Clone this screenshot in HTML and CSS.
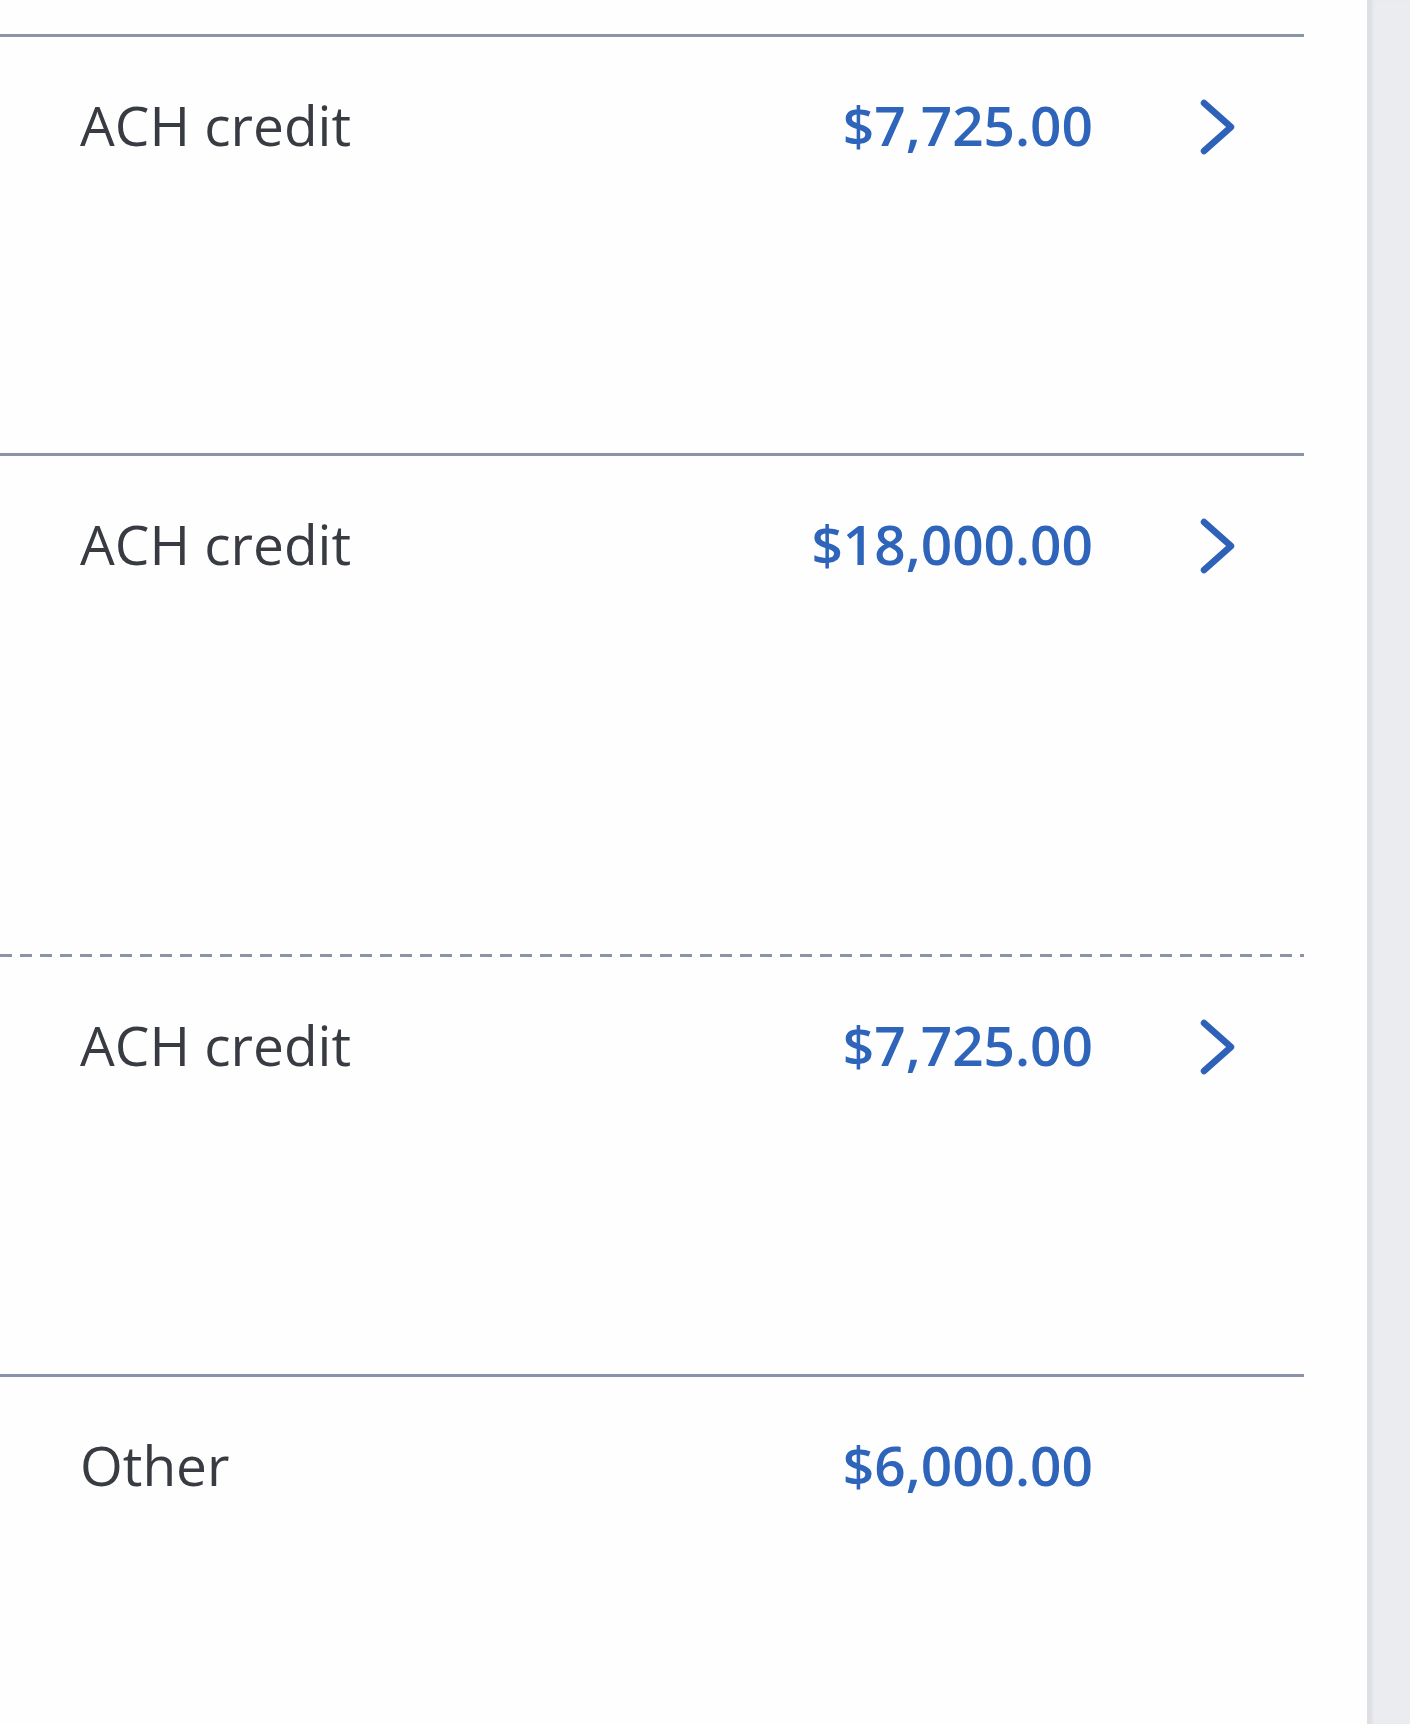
FILE: index.html
```html
<!DOCTYPE html>
<html lang="en">
<head>
<meta charset="utf-8">
<title>Transactions</title>
<link rel="stylesheet" href="styles.css">
</head>
<body>
<div class="page">
  <main class="main">
    <ul class="list">
      <li class="row row-a">
        <span class="label">ACH credit</span>
        <span class="amount">$7,725.00</span>
        <span class="go"><svg class="chev" viewBox="0 0 40 56" width="40" height="56"><polyline points="6,4 33,28 6,52"/></svg></span>
      </li>
      <li class="row row-b">
        <span class="label">ACH credit</span>
        <span class="amount">$18,000.00</span>
        <span class="go"><svg class="chev" viewBox="0 0 40 56" width="40" height="56"><polyline points="6,4 33,28 6,52"/></svg></span>
      </li>
      <li class="row row-c dashed">
        <span class="label">ACH credit</span>
        <span class="amount">$7,725.00</span>
        <span class="go"><svg class="chev" viewBox="0 0 40 56" width="40" height="56"><polyline points="6,4 33,28 6,52"/></svg></span>
      </li>
      <li class="row row-d">
        <span class="label">Other</span>
        <span class="amount">$6,000.00</span>
        <span class="go"></span>
      </li>
    </ul>
  </main>
  <aside class="side"></aside>
</div>
</body>
</html>
```

FILE: styles.css
```css
html, body {
  margin: 0;
  padding: 0;
  background: #ffffff;
}
body {
  font-family: "Open Sans", "Noto Sans", "DejaVu Sans", sans-serif;
}
.page {
  display: flex;
  width: 1410px;
  height: 1724px;
  overflow: hidden;
}
.main {
  width: 1367px;
  flex: none;
  background: #fefefe;
  padding-top: 34px;
  box-sizing: border-box;
}
.side {
  flex: 1;
  background: #ebecf0;
  border-left: 4px solid #dedfe4;
  box-shadow: inset 2px 0 2px rgba(0,0,0,0.04);
}
.list {
  list-style: none;
  margin: 0;
  padding: 0;
  width: 1304px;
}
.row {
  display: flex;
  align-items: flex-start;
  box-sizing: border-box;
  border-top: 3px solid #8a93a7;
  padding: 50px 0 0 80px;
  font-size: 55px;
  line-height: 76px;
}
.row-a { height: 419px; }
.row-b { height: 501px; }
.row-c { height: 420px; }
.row-d { height: 360px; }
.dashed {
  border-top: none;
  padding-top: 53px;
  background-image: repeating-linear-gradient(90deg, #8a93a7 0 12px, transparent 12px 20px);
  background-size: 100% 3px;
  background-repeat: no-repeat;
  background-position: 0 0;
}
.label {
  flex: 1;
  color: #383c42;
  font-weight: 400;
}
.amount {
  color: #2e65bb;
  font-weight: 600;
  text-align: right;
}
.go {
  width: 211px;
  flex: none;
  padding-left: 105px;
  box-sizing: border-box;
  display: flex;
}
.chev {
  margin-top: 12px;
  fill: none;
  stroke: #2e62b9;
  stroke-width: 6.5;
  stroke-linecap: round;
  stroke-linejoin: round;
}
```
